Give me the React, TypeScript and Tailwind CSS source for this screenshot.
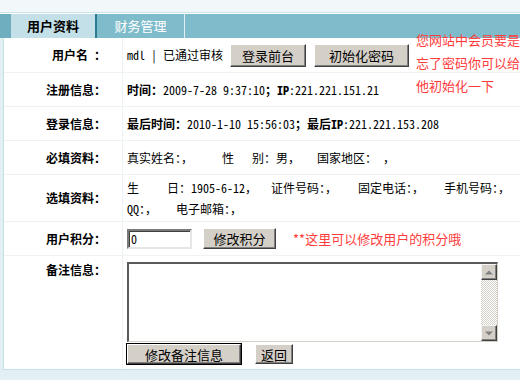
import React from 'react'

const M = ({ children }: { children: React.ReactNode }) => (
  <span className="font-['Noto_Sans_Mono_CJK_SC','Liberation_Mono',monospace]">{children}</span>
)

function Btn({ children, className = '' }: { children: React.ReactNode; className?: string }) {
  return (
    <button
      className={`flex shrink-0 items-center justify-center border border-t-white border-l-white border-r-[#404040] border-b-[#404040] bg-[#d4d0c8] text-[13px] leading-none text-black shadow-[inset_-1px_-1px_#808080] ${className}`}
    >
      {children}
    </button>
  )
}

function Arrow({ up = false }: { up?: boolean }) {
  return (
    <div className="flex h-[16px] w-[16px] items-center justify-center border border-t-[#f4f4f4] border-l-[#f4f4f4] border-r-[#404040] border-b-[#404040] bg-[#d4d0c8] shadow-[inset_-1px_-1px_#808080]">
      <svg width="8" height="5" viewBox="0 0 8 5">
        {up ? <polygon points="0,4.5 4,0.5 8,4.5" fill="#808080" /> : <polygon points="0,0.5 8,0.5 4,4.5" fill="#808080" />}
      </svg>
    </div>
  )
}

function Row({ label, className, children }: { label: React.ReactNode; className: string; children: React.ReactNode }) {
  return (
    <div className={`flex border-b border-[#edf3f5] ${className}`}>
      <div className="flex w-[119px] shrink-0 items-center justify-end border-r border-[#edf3f5] pr-[16px] font-bold">
        {label}
      </div>
      <div className="flex flex-1 items-center whitespace-nowrap pl-[4px]">{children}</div>
    </div>
  )
}

export default function App() {
  return (
    <div className="h-[380px] w-[520px] overflow-hidden bg-[#e2f0f4] font-['Noto_Sans_CJK_SC',sans-serif] text-[12px] text-black">
      <div className="w-[640px]">
        {/* top strip + tabs */}
        <div className="h-[12px] bg-[#f2f8fa]" />
        <div className="h-px bg-[#cbe3ea]" />
        <div className="h-px bg-white" />
        <div className="flex h-[24px] bg-[#7fbccb]">
          <div className="w-[11px] bg-[#6eaebf]" />
          <div className="flex w-[86px] items-center justify-center border-r-2 border-[#2c7c90] bg-[#c3e0e8] text-[13px] font-bold">
            用户资料
          </div>
          <div className="flex w-[88px] items-center justify-center border-r border-[#e0f0f4] text-[13px] text-white">
            财务管理
          </div>
        </div>

        {/* form */}
        <div className="relative ml-[3px] border-b border-l border-[#c6e0e8] bg-white">
          <Row label={<>用户名<span className="ml-[6px]">：</span></>} className="h-[35px]">
            <M>{'mdl\u00a0|\u00a0'}</M>
            <span>已通过审核</span>
            <Btn className="ml-[7px] h-[23px] w-[76px]">登录前台</Btn>
            <Btn className="ml-[8px] h-[23px] w-[95px]">初始化密码</Btn>
          </Row>
          <Row label="注册信息：" className="h-[34px]">
            <b>时间：</b>
            <M>2009-7-28 9:37:10</M>
            <b>；<M>IP</M></b>
            <M>:221.221.151.21</M>
          </Row>
          <Row label="登录信息：" className="h-[34px]">
            <b>最后时间：</b>
            <M>2010-1-10 15:56:03</M>
            <b>；最后<M>IP</M></b>
            <M>:221.221.153.208</M>
          </Row>
          <Row label="必填资料：" className="h-[34px]">
            <span>真实姓名：，</span>
            <span className="ml-[29px]">性</span>
            <span className="ml-[18px]">别：男，</span>
            <span className="ml-[17px]">国家地区：</span>
            <span className="ml-[6px]">，</span>
          </Row>
          <Row label="选填资料：" className="h-[47px]">
            <div className="flex flex-col leading-[21px]">
              <div className="flex">
                <span>生</span>
                <span className="ml-[28px]">日：</span>
                <M>1905-6-12</M>
                <span>，</span>
                <span className="ml-[14px]">证件号码：，</span>
                <span className="ml-[21px]">固定电话：，</span>
                <span className="ml-[20px]">手机号码：，</span>
              </div>
              <div className="flex">
                <M>QQ</M>
                <span>：，</span>
                <span className="ml-[19px]">电子邮箱：，</span>
              </div>
            </div>
          </Row>
          <Row label="用户积分：" className="h-[34px]">
            <div className="flex h-[20px] w-[65px] items-center border-2 border-t-[#7a7a7a] border-l-[#7a7a7a] border-r-[#e6e6e6] border-b-[#e6e6e6] bg-white pl-[2px] shadow-[inset_1px_1px_#404040]">
              <M>0</M>
            </div>
            <Btn className="ml-[11px] h-[21px] w-[73px]">修改积分</Btn>
            <span className="ml-[17px] text-[13px] text-[#ff3c3c]">**这里可以修改用户的积分哦</span>
          </Row>
          <div className="flex h-[113px]">
            <div className="flex w-[119px] shrink-0 justify-end border-r border-[#edf3f5] pr-[16px] pt-[5px] font-bold leading-[18px]">
              备注信息：
            </div>
            <div className="flex flex-col pl-[4px] pt-[6px]">
              <div className="flex h-[80px] w-[371px] border-t-2 border-l-2 border-r border-b border-t-[#5a5a5a] border-l-[#5a5a5a] border-r-[#d4d0c8] border-b-[#d4d0c8] bg-white">
                <div className="flex-1" />
                <div className="flex w-[16px] flex-col">
                  <Arrow up />
                  <div className="flex-1 bg-[image:repeating-conic-gradient(#d4d0c8_0%_25%,#ffffff_0%_50%)] bg-size-[2px_2px]" />
                  <Arrow />
                </div>
              </div>
              <div className="mt-[2px] flex">
                <Btn className="h-[20px] w-[114px] outline outline-1 outline-black">修改备注信息</Btn>
                <Btn className="ml-[14px] h-[20px] w-[38px]">返回</Btn>
              </div>
            </div>
          </div>

          {/* note beside reset button */}
          <div className="absolute left-[412px] top-[-10px] w-[108px] text-[13px] leading-[23px] text-[#ff3c3c]">
            您网站中会员要是忘了密码你可以给他初始化一下
          </div>
        </div>
      </div>
    </div>
  )
}
